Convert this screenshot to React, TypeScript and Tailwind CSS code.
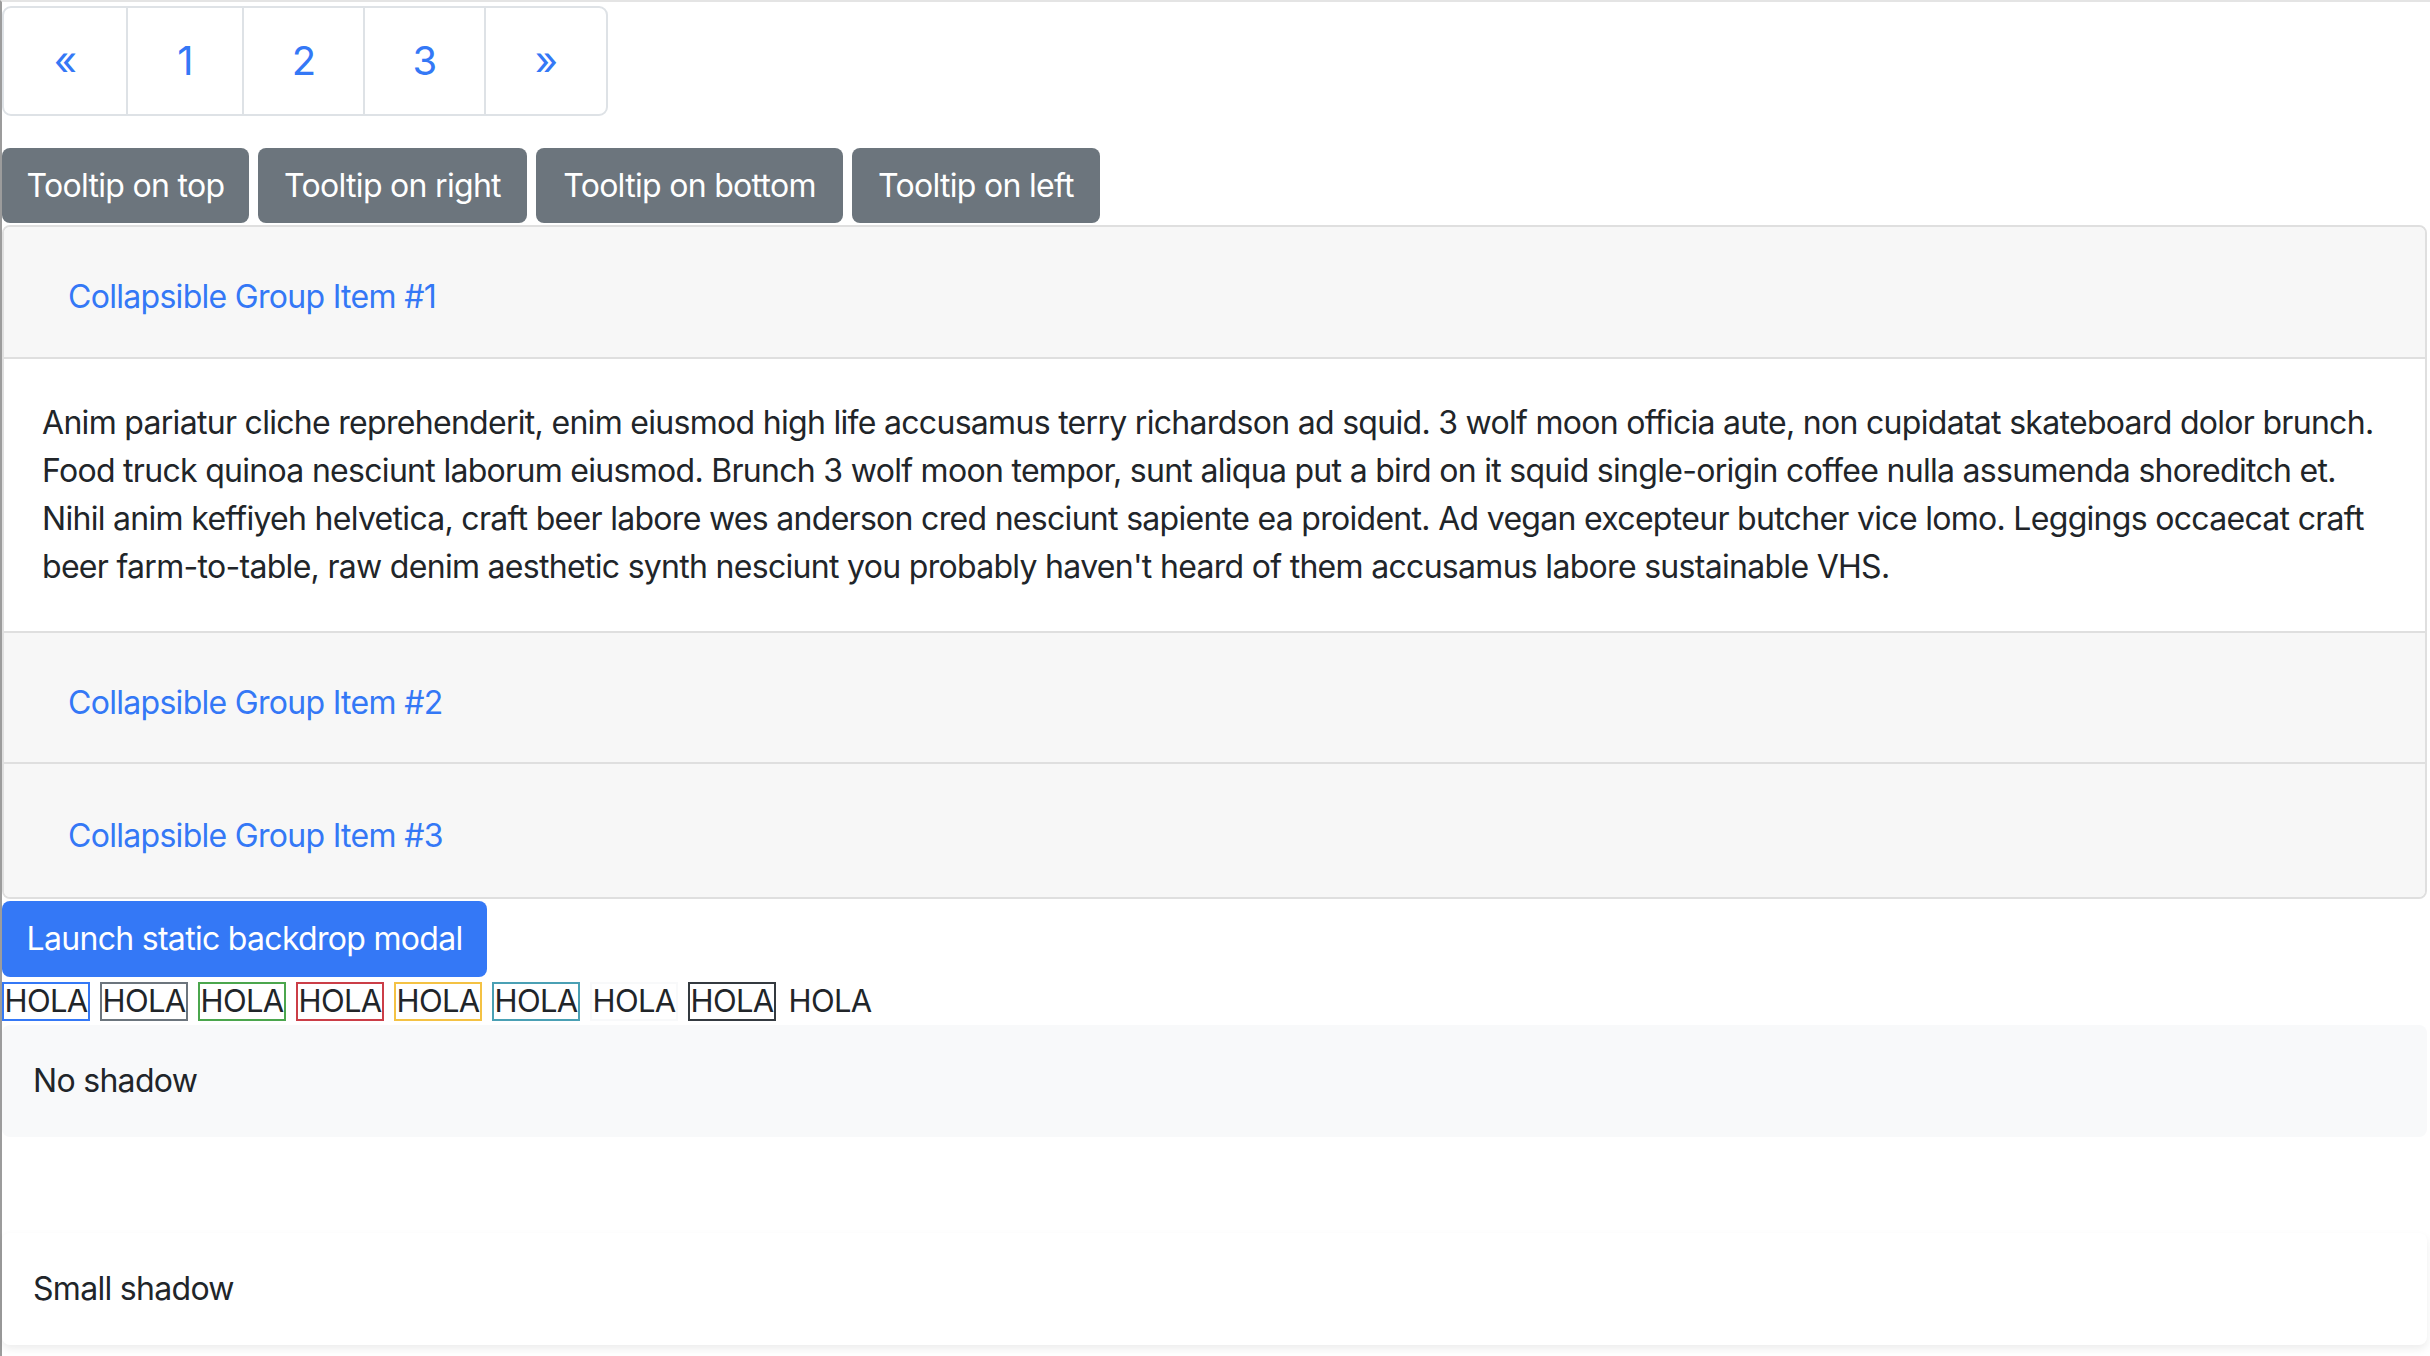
const pages = [
  { label: "«", w: "w-[122px]" },
  { label: "1", w: "w-[116px]" },
  { label: "2", w: "w-[121px]" },
  { label: "3", w: "w-[121px]" },
  { label: "»", w: "w-[122px]" },
];

const tooltips = [
  { label: "Tooltip on top", w: "w-[247px]" },
  { label: "Tooltip on right", w: "w-[269px]" },
  { label: "Tooltip on bottom", w: "w-[307px]" },
  { label: "Tooltip on left", w: "w-[248px]" },
];

const bodyLines = [
  "Anim pariatur cliche reprehenderit, enim eiusmod high life accusamus terry richardson ad squid. 3 wolf moon officia aute, non cupidatat skateboard dolor brunch.",
  "Food truck quinoa nesciunt laborum eiusmod. Brunch 3 wolf moon tempor, sunt aliqua put a bird on it squid single-origin coffee nulla assumenda shoreditch et.",
  "Nihil anim keffiyeh helvetica, craft beer labore wes anderson cred nesciunt sapiente ea proident. Ad vegan excepteur butcher vice lomo. Leggings occaecat craft",
  "beer farm-to-table, raw denim aesthetic synth nesciunt you probably haven't heard of them accusamus labore sustainable VHS.",
];

// border colours as they show in the screenshot
const holaBorders = [
  "border-[#3478f6]",
  "border-[#6c757d]",
  "border-[#4ba64d]",
  "border-[#cb3e47]",
  "border-[#f4c244]",
  "border-[#4aa0b4]",
  "border-[#f8f9fa]",
  "border-[#343a40]",
  "border-white",
];

function GroupHeader({ title, h, top }: { title: string; h: string; top?: boolean }) {
  return (
    <div
      className={`flex items-center bg-[#f7f7f7] pl-[64px] pt-[10px] ${h} ${
        top ? "border-t-2 border-[#dfdfdf]" : ""
      }`}
    >
      <span className="text-[32px] leading-[48px] text-[#3478f6]">{title}</span>
    </div>
  );
}

export default function App() {
  return (
    <div className="min-h-screen border-t-2 border-l-2 border-t-[#e4e4e4] border-l-[#9c9c9c] bg-white font-['Inter',sans-serif] tracking-[-0.7px] text-[#212529]">
      <div className="w-[2425px] pt-[4px]">
        {/* pagination */}
        <div className="flex h-[110px] w-fit overflow-hidden rounded-[9px] border-2 border-[#dee2e6]">
          {pages.map((p, i) => (
            <div
              key={p.label}
              className={`flex items-center justify-center text-[40px] text-[#3478f6] ${p.w} ${
                i > 0 ? "border-l-2 border-[#dee2e6]" : ""
              }`}
            >
              {p.label}
            </div>
          ))}
        </div>

        {/* tooltip buttons */}
        <div className="mt-[32px] flex gap-[9px]">
          {tooltips.map((t) => (
            <div
              key={t.label}
              className={`flex h-[75px] items-center justify-center rounded-[8px] bg-[#6c757d] text-[32px] text-white ${t.w}`}
            >
              {t.label}
            </div>
          ))}
        </div>

        {/* accordion */}
        <div className="mt-[2px] overflow-hidden rounded-[8px] border-2 border-[#dfdfdf]">
          <GroupHeader title="Collapsible Group Item #1" h="h-[130px]" />
          <div className="border-t-2 border-[#dfdfdf] px-[38px] py-[40px] text-[32px] leading-[48px]">
            {bodyLines.map((line) => (
              <span key={line} className="block whitespace-nowrap">
                {line}
              </span>
            ))}
          </div>
          <GroupHeader title="Collapsible Group Item #2" h="h-[131px]" top />
          <GroupHeader title="Collapsible Group Item #3" h="h-[135px]" top />
        </div>

        <div className="mt-[2px] flex h-[76px] w-[485px] items-center justify-center rounded-[8px] bg-[#3478f6] text-[32px] text-white">
          Launch static backdrop modal
        </div>

        {/* bordered spans */}
        <div className="flex h-[48px] items-center gap-[10px]">
          {holaBorders.map((b, i) => (
            <span
              key={i}
              className={`flex h-[39px] w-[88px] items-center justify-center border-2 text-[31px] ${b}`}
            >
              HOLA
            </span>
          ))}
        </div>

        {/* shadows */}
        <div className="flex h-[112px] items-center rounded-[8px] bg-[#f8f9fa] px-[31px] text-[32px]">
          No shadow
        </div>
        <div className="mt-[96px] flex h-[112px] items-center rounded-[8px] bg-white px-[31px] text-[32px] shadow-[0_4px_8px_rgba(0,0,0,0.075)]">
          Small shadow
        </div>
      </div>
    </div>
  );
}
